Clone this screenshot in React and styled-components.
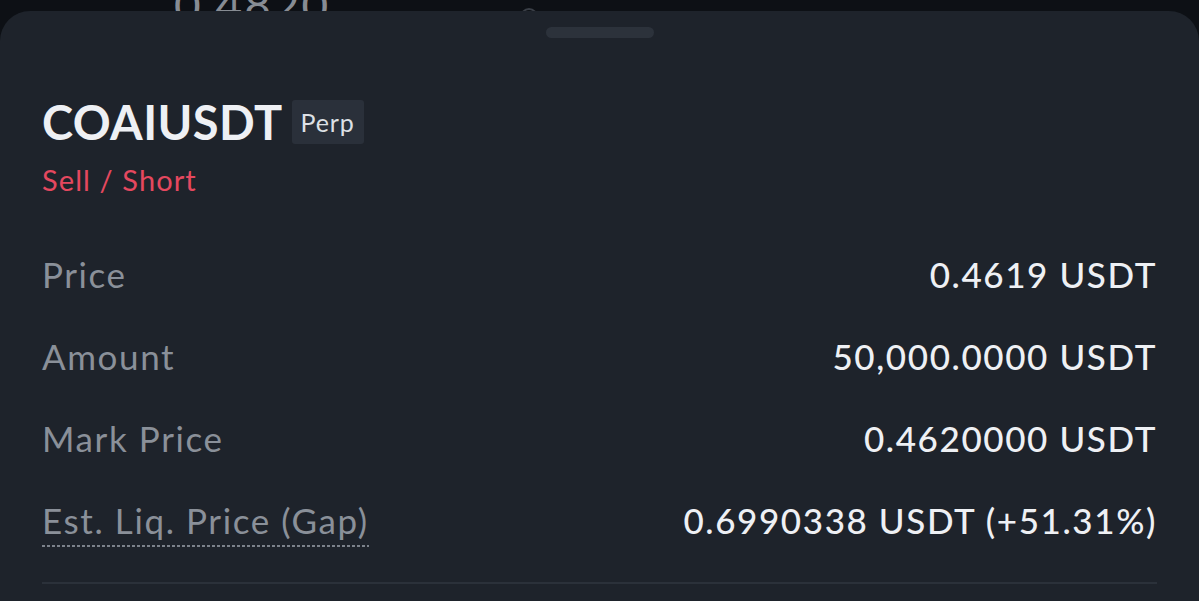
import React from "react";
import styled, { createGlobalStyle } from "styled-components";

const Global = createGlobalStyle`
  html, body { margin: 0; padding: 0; background: #0d1015; }
  body { font-family: Lato, "Open Sans", sans-serif; overflow: hidden; }
  * { box-sizing: border-box; }
`;

const Page = styled.div`
  width: 1199px;
  height: 601px;
  background: #0d1015;
  overflow: hidden;
`;

const Backdrop = styled.div`
  height: 11px;
  overflow: hidden;
  display: flex;
  align-items: flex-start;
  padding-left: 174px;
  gap: 190px;
`;

const BackdropPrice = styled.span`
  font-size: 46px;
  line-height: 46px;
  margin-top: -18px;
  color: #878c93;
  letter-spacing: 2px;
`;

const BackdropDot = styled.span`
  margin-top: 8px;
  width: 18px;
  height: 18px;
  border-radius: 50%;
  border: 2px solid #3a3f47;
`;

const Sheet = styled.section`
  height: 590px;
  background: #1e232b;
  border-radius: 30px 30px 0 0;
  padding: 16px 42px 0;
  display: flex;
  flex-direction: column;
`;

const Handle = styled.div`
  align-self: center;
  width: 108px;
  height: 11px;
  border-radius: 6px;
  background: #2c323b;
`;

const Header = styled.div`
  margin-top: 62px;
  height: 44px;
  display: flex;
  align-items: center;
  gap: 9px;
`;

const Symbol = styled.h1`
  margin: 0;
  font-size: 47px;
  line-height: 44px;
  font-weight: 700;
  color: #eef0f4;
  letter-spacing: 0.4px;
`;

const Badge = styled.span`
  height: 44px;
  width: 72px;
  display: flex;
  align-items: center;
  justify-content: center;
  background: #2a303a;
  border-radius: 3px;
  color: #dde0e5;
  font-size: 25px;
  letter-spacing: 0.8px;
`;

const Side = styled.div`
  margin-top: 19px;
  height: 34px;
  line-height: 34px;
  font-size: 29px;
  color: #e5485f;
  letter-spacing: 1.1px;
`;

const Rows = styled.div`
  margin-top: 36px;
  display: flex;
  flex-direction: column;
`;

const Row = styled.div`
  height: 82px;
  display: flex;
  align-items: center;
  justify-content: space-between;
  font-size: 35px;
  letter-spacing: 1.6px;
`;

const Label = styled.span`
  color: #8a9099;
  position: relative;
  ${(p) =>
    p.$hint &&
    `
    &::after {
      content: "";
      position: absolute;
      left: 0;
      right: 0;
      bottom: -6px;
      height: 2px;
      background-image: linear-gradient(to right, #7c828b 0 3px, transparent 3px 5px);
      background-size: 5px 2px;
      background-repeat: repeat-x;
    }
  `}
`;

const Value = styled.span`
  color: #eef0f4;
  font-weight: 500;
`;

const Divider = styled.div`
  margin-top: 21px;
  height: 2px;
  background: #2b313a;
`;

const rows = [
  { label: "Price", value: "0.4619 USDT" },
  { label: "Amount", value: "50,000.0000 USDT" },
  { label: "Mark Price", value: "0.4620000 USDT" },
  { label: "Est. Liq. Price (Gap)", value: "0.6990338 USDT (+51.31%)", hint: true },
];

export default function App() {
  return (
    <Page>
      <Global />
      <Backdrop aria-hidden="true">
        <BackdropPrice>0.4820</BackdropPrice>
        <BackdropDot />
      </Backdrop>
      <Sheet>
        <Handle />
        <Header>
          <Symbol>COAIUSDT</Symbol>
          <Badge>Perp</Badge>
        </Header>
        <Side>Sell / Short</Side>
        <Rows>
          {rows.map((r) => (
            <Row key={r.label}>
              <Label $hint={r.hint}>{r.label}</Label>
              <Value>{r.value}</Value>
            </Row>
          ))}
        </Rows>
        <Divider />
      </Sheet>
    </Page>
  );
}
